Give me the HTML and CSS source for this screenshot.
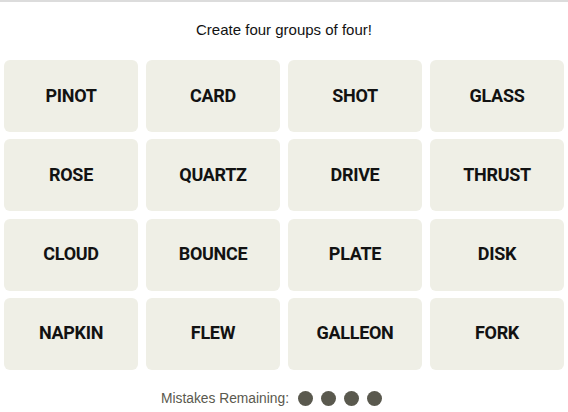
FILE: index.html
```html
<!DOCTYPE html>
<html>
<head>
<meta charset="utf-8">
<link rel="stylesheet" href="styles.css">
</head>
<body>
<div class="page">
  <p class="prompt">Create four groups of four!</p>
  <div class="board">
    <div class="tile">PINOT</div>
    <div class="tile">CARD</div>
    <div class="tile">SHOT</div>
    <div class="tile">GLASS</div>
    <div class="tile">ROSE</div>
    <div class="tile">QUARTZ</div>
    <div class="tile">DRIVE</div>
    <div class="tile">THRUST</div>
    <div class="tile">CLOUD</div>
    <div class="tile">BOUNCE</div>
    <div class="tile">PLATE</div>
    <div class="tile">DISK</div>
    <div class="tile">NAPKIN</div>
    <div class="tile">FLEW</div>
    <div class="tile">GALLEON</div>
    <div class="tile">FORK</div>
  </div>
  <div class="mistakes">
    <span class="mistakes-label">Mistakes Remaining:</span>
    <span class="dots">
      <span class="dot"></span><span class="dot"></span><span class="dot"></span><span class="dot"></span>
    </span>
  </div>
</div>
</body>
</html>
```
FILE: styles.css
```css
* { box-sizing: border-box; }
html, body { margin: 0; padding: 0; background: #fff; }
body { font-family: "Liberation Sans", Arial, sans-serif; color: #121212; }
.page {
  border-top: 2px solid #dcdcdc;
  padding: 0 4px;
}
.prompt {
  margin: 0;
  padding-top: 19px;
  height: 58px;
  text-align: center;
  font-size: 15px;
  line-height: 18px;
}
.board {
  display: grid;
  grid-template-columns: repeat(4, 1fr);
  grid-auto-rows: 72px;
  column-gap: 8px;
  row-gap: 7.33px;
}
.tile {
  background: #efefe6;
  border-radius: 6px;
  display: flex;
  align-items: center;
  justify-content: center;
  padding-bottom: 2px;
  font-family: Roboto, "Liberation Sans", sans-serif;
  font-weight: 700;
  font-size: 18px;
  letter-spacing: -0.3px;
  color: #121212;
}
.mistakes {
  display: flex;
  justify-content: center;
  align-items: center;
  gap: 9px;
  margin-top: 21px;
  padding-right: 25px;
  font-size: 14px;
  color: #5a594e;
}
.mistakes-label { font-size: 13.8px; }
.dots { display: flex; gap: 8px; }
.dot {
  width: 15px;
  height: 15px;
  border-radius: 50%;
  background: #5a594e;
}
```
